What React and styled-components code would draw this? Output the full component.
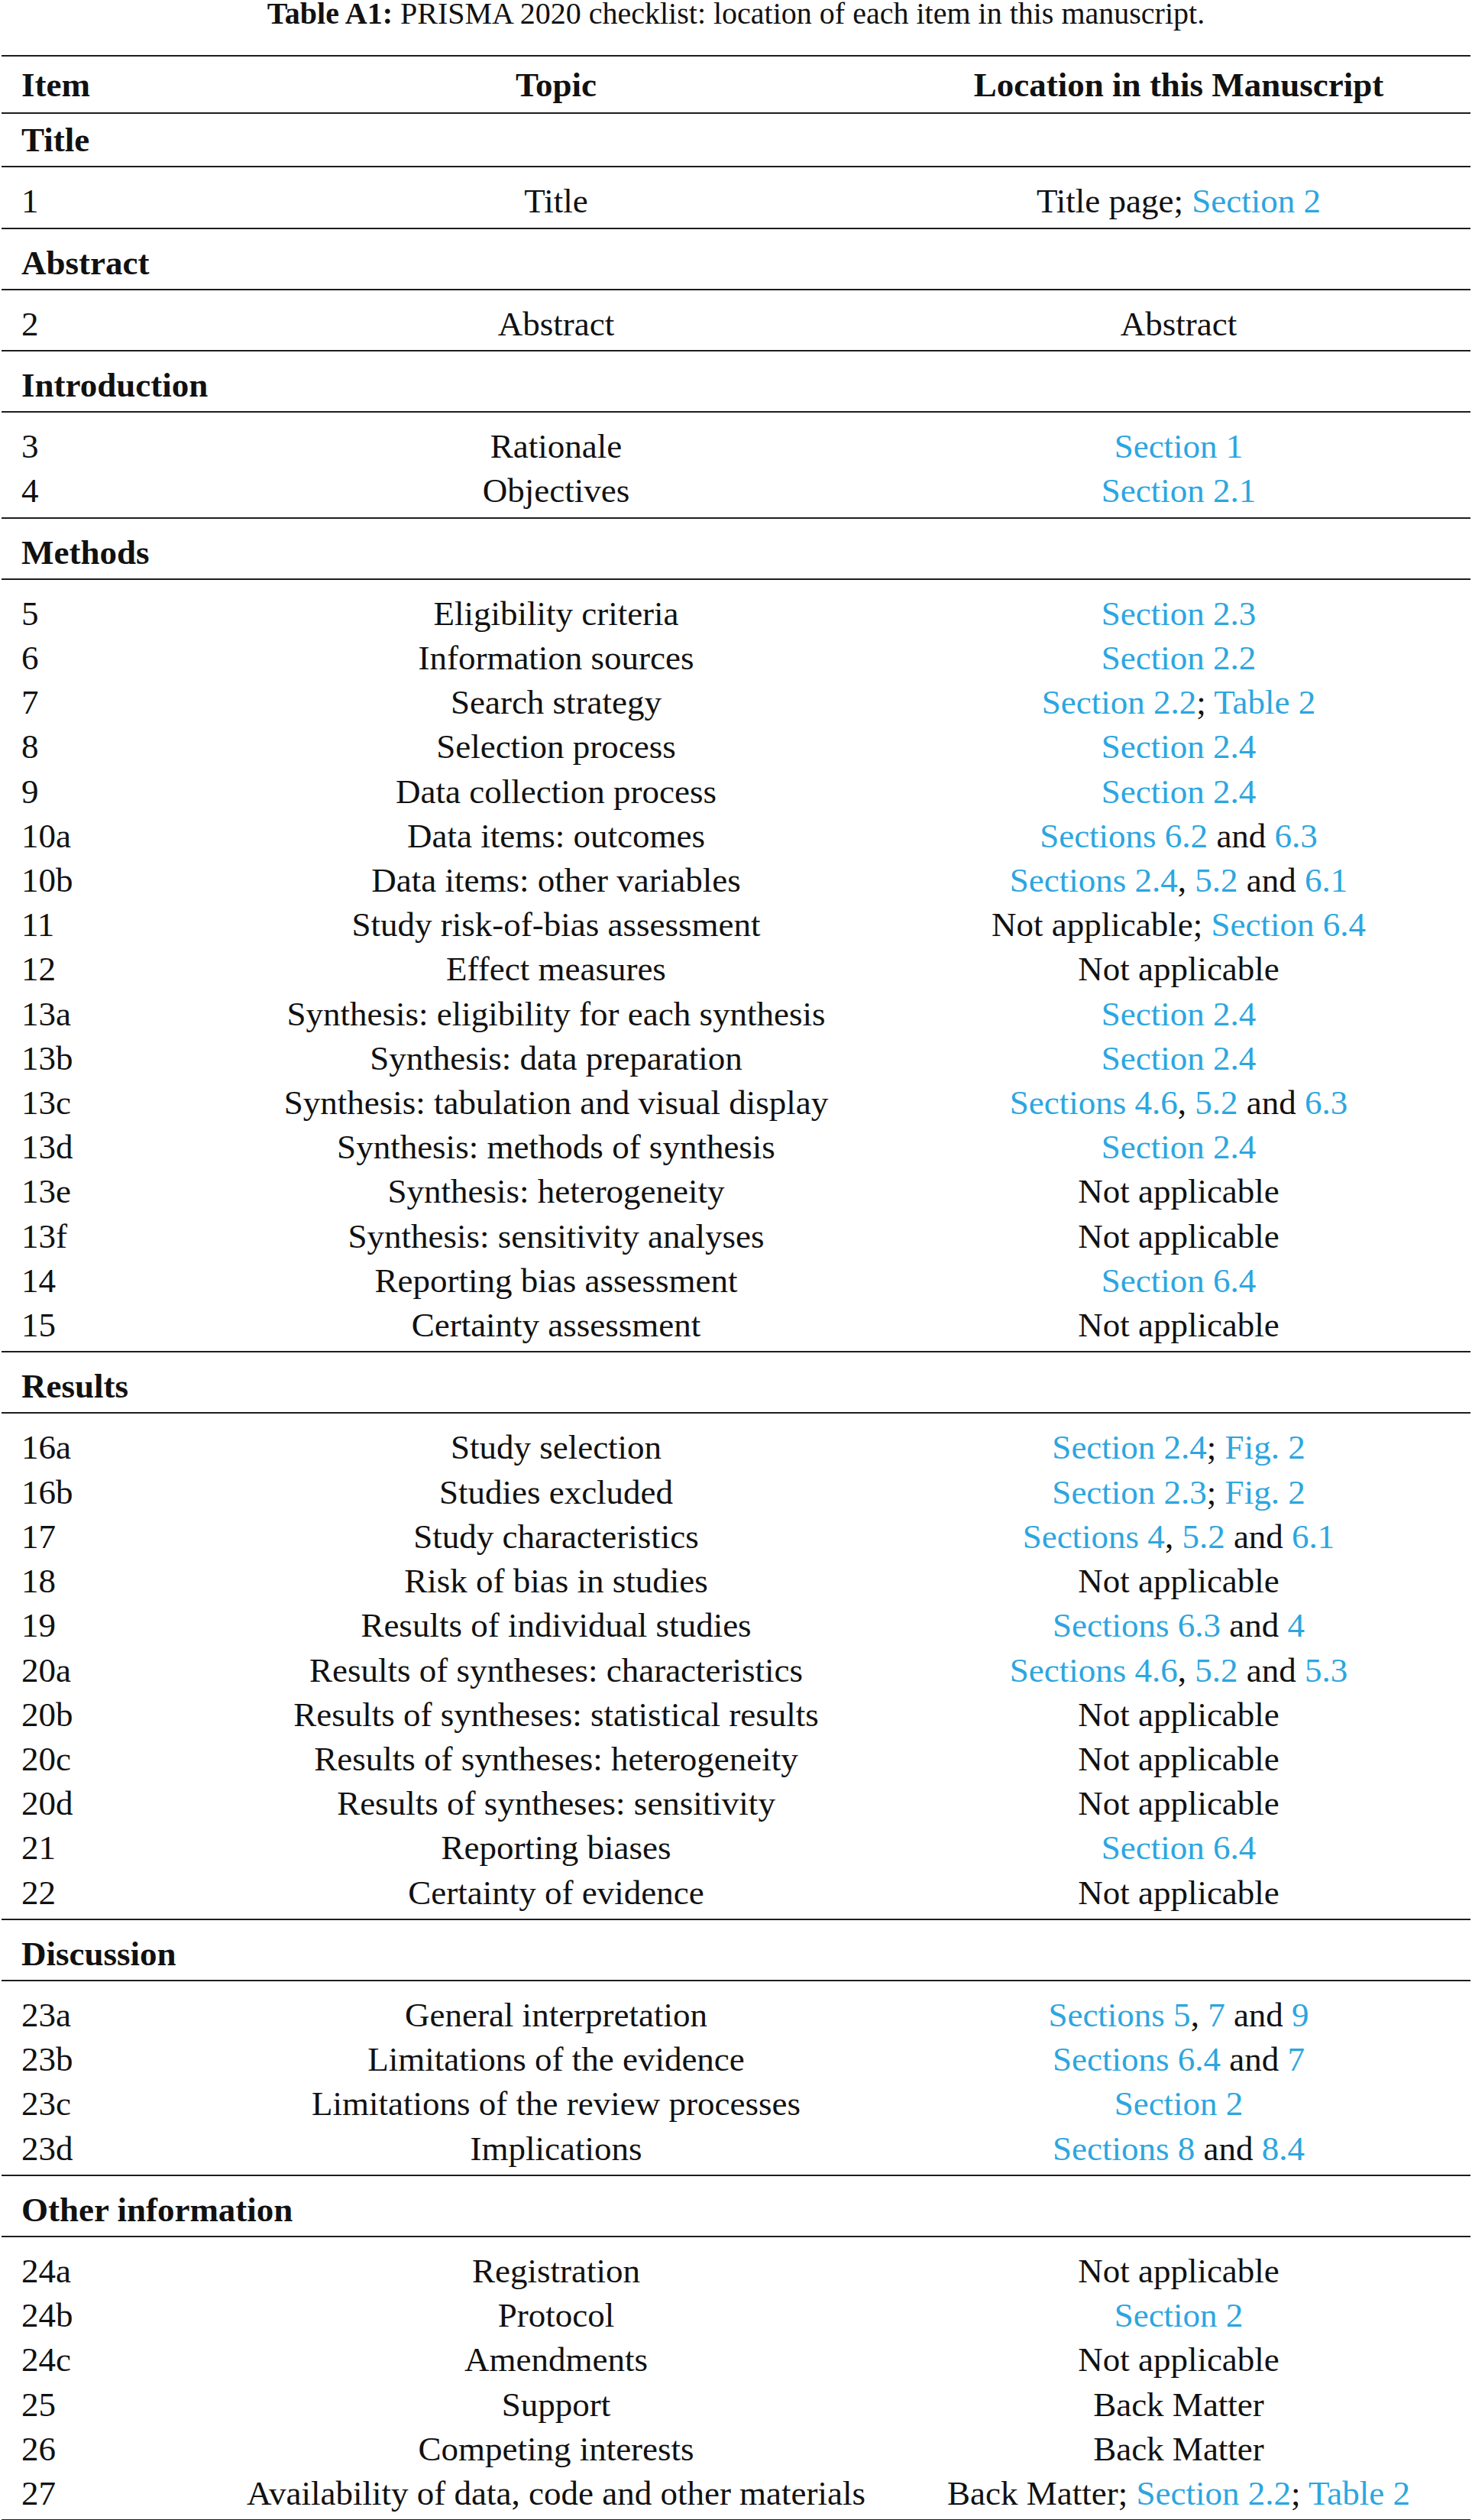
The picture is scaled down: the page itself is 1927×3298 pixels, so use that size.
import React from "react";
import styled, { createGlobalStyle } from "styled-components";

const GlobalStyle = createGlobalStyle`
  html, body {
    margin: 0;
    padding: 0;
    background: #fff;
  }
  body {
    font-family: "Liberation Serif", "Times New Roman", serif;
    color: #111;
  }
`;

const Page = styled.div`
  width: 1927px;
  padding: 0 2px;
  box-sizing: border-box;
`;

const Caption = styled.div`
  text-align: center;
  font-size: 40px;
  line-height: 36px;
  margin-bottom: 36px;
  color: #111;

  b {
    font-weight: 700;
  }
`;

const Block = styled.div`
  border-top: 2px solid #1d1d1d;
  padding-top: ${({ $top }) => $top}px;
  padding-bottom: ${({ $bottom }) => $bottom}px;
  &:last-child {
    border-bottom: 2px solid #1d1d1d;
  }
`;

const Row = styled.div`
  display: grid;
  grid-template-columns: 293px 866px 1fr;
  font-size: 45px;
  line-height: 58.2px;
  font-weight: ${({ $bold }) => ($bold ? 700 : 400)};
  white-space: nowrap;
`;

const ItemCell = styled.div`
  padding-left: 26px;
`;

const Cell = styled.div`
  text-align: center;
`;

const SectionTitle = styled.div`
  grid-column: 1 / -1;
  padding-left: 26px;
  font-weight: 700;
`;

const Link = styled.span`
  color: #2ca6e0;
`;

const sections = [
  { title: "Title", top: 5, rows: [["1", "Title", "Title page; [Section 2]"]] },
  { title: "Abstract", rows: [["2", "Abstract", "Abstract"]] },
  {
    title: "Introduction",
    rows: [
      ["3", "Rationale", "[Section 1]"],
      ["4", "Objectives", "[Section 2.1]"],
    ],
  },
  {
    title: "Methods",
    rows: [
      ["5", "Eligibility criteria", "[Section 2.3]"],
      ["6", "Information sources", "[Section 2.2]"],
      ["7", "Search strategy", "[Section 2.2]; [Table 2]"],
      ["8", "Selection process", "[Section 2.4]"],
      ["9", "Data collection process", "[Section 2.4]"],
      ["10a", "Data items: outcomes", "[Sections 6.2] and [6.3]"],
      ["10b", "Data items: other variables", "[Sections 2.4], [5.2] and [6.1]"],
      ["11", "Study risk-of-bias assessment", "Not applicable; [Section 6.4]"],
      ["12", "Effect measures", "Not applicable"],
      ["13a", "Synthesis: eligibility for each synthesis", "[Section 2.4]"],
      ["13b", "Synthesis: data preparation", "[Section 2.4]"],
      ["13c", "Synthesis: tabulation and visual display", "[Sections 4.6], [5.2] and [6.3]"],
      ["13d", "Synthesis: methods of synthesis", "[Section 2.4]"],
      ["13e", "Synthesis: heterogeneity", "Not applicable"],
      ["13f", "Synthesis: sensitivity analyses", "Not applicable"],
      ["14", "Reporting bias assessment", "[Section 6.4]"],
      ["15", "Certainty assessment", "Not applicable"],
    ],
  },
  {
    title: "Results",
    rows: [
      ["16a", "Study selection", "[Section 2.4]; [Fig. 2]"],
      ["16b", "Studies excluded", "[Section 2.3]; [Fig. 2]"],
      ["17", "Study characteristics", "[Sections 4], [5.2] and [6.1]"],
      ["18", "Risk of bias in studies", "Not applicable"],
      ["19", "Results of individual studies", "[Sections 6.3] and [4]"],
      ["20a", "Results of syntheses: characteristics", "[Sections 4.6], [5.2] and [5.3]"],
      ["20b", "Results of syntheses: statistical results", "Not applicable"],
      ["20c", "Results of syntheses: heterogeneity", "Not applicable"],
      ["20d", "Results of syntheses: sensitivity", "Not applicable"],
      ["21", "Reporting biases", "[Section 6.4]"],
      ["22", "Certainty of evidence", "Not applicable"],
    ],
  },
  {
    title: "Discussion",
    rows: [
      ["23a", "General interpretation", "[Sections 5], [7] and [9]"],
      ["23b", "Limitations of the evidence", "[Sections 6.4] and [7]"],
      ["23c", "Limitations of the review processes", "[Section 2]"],
      ["23d", "Implications", "[Sections 8] and [8.4]"],
    ],
  },
  {
    title: "Other information",
    rows: [
      ["24a", "Registration", "Not applicable"],
      ["24b", "Protocol", "[Section 2]"],
      ["24c", "Amendments", "Not applicable"],
      ["25", "Support", "Back Matter"],
      ["26", "Competing interests", "Back Matter"],
      ["27", "Availability of data, code and other materials", "Back Matter; [Section 2.2]; [Table 2]"],
    ],
  },
];

// text in [brackets] is a cross-reference, drawn in blue
const Location = ({ text }) => {
  const parts = text.split(/(\[[^\]]+\])/).filter(Boolean);
  return parts.map((p, i) =>
    p.startsWith("[") ? <Link key={i}>{p.slice(1, -1)}</Link> : <span key={i}>{p}</span>
  );
};

export default function App() {
  return (
    <Page>
      <GlobalStyle />
      <Caption>
        <b>Table A1:</b> PRISMA 2020 checklist: location of each item in this manuscript.
      </Caption>
      <div>
        <Block $top={8} $bottom={7}>
          <Row $bold>
            <ItemCell>Item</ItemCell>
            <Cell>Topic</Cell>
            <Cell>Location in this Manuscript</Cell>
          </Row>
        </Block>
        {sections.map((s) => (
          <React.Fragment key={s.title}>
            <Block $top={s.top ?? 15} $bottom={5}>
              <Row>
                <SectionTitle>{s.title}</SectionTitle>
              </Row>
            </Block>
            <Block $top={15} $bottom={5}>
              {s.rows.map(([num, topic, loc]) => (
                <Row key={num}>
                  <ItemCell>{num}</ItemCell>
                  <Cell>{topic}</Cell>
                  <Cell>
                    <Location text={loc} />
                  </Cell>
                </Row>
              ))}
            </Block>
          </React.Fragment>
        ))}
      </div>
    </Page>
  );
}
